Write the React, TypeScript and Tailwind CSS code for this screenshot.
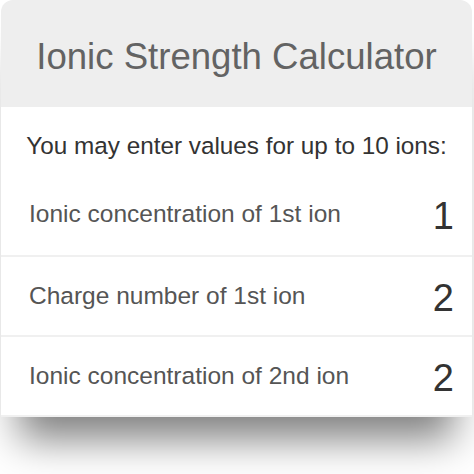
export default function App() {
  const rows = [
    { label: 'Charge number of 1st ion', value: '2' },
    { label: 'Ionic concentration of 2nd ion', value: '2' },
  ]
  return (
    <div className="w-[474px] h-[474px] bg-white overflow-hidden" style={{ fontFamily: '"Liberation Sans", Arial, sans-serif' }}>
      <div className="ml-[1px] w-[471px] rounded-t-xl bg-white shadow-[0_40px_38px_-18px_rgba(0,0,0,0.5)]">
        <div className="h-[107px] rounded-t-xl bg-[#eeeeee] flex items-center justify-center pt-[8px]">
          <h1 className="text-[36.6px] text-[#636363]">Ionic Strength Calculator</h1>
        </div>
        <div className="h-[150px] border-b-2 border-[#f0f0f0]">
          <p className="pt-[24px] text-center text-[24.3px] text-[#333333] leading-[30px]">You may enter values for up to 10 ions:</p>
          <div className="h-[96px] flex items-center justify-between pl-[28px] pr-[18px] pt-[10px]">
            <span className="text-[24.5px] text-[#555555]">Ionic concentration of 1st ion</span>
            <span className="text-[38px] text-[#333333] mt-[4px]">1</span>
          </div>
        </div>
        {rows.map(r => (
          <div key={r.label} className="h-[80px] flex items-center justify-between pl-[28px] pr-[18px] border-b-2 border-[#f0f0f0]">
            <span className="text-[24.5px] text-[#555555]">{r.label}</span>
            <span className="text-[38px] text-[#333333] mt-[4px]">{r.value}</span>
          </div>
        ))}
      </div>
    </div>
  )
}
